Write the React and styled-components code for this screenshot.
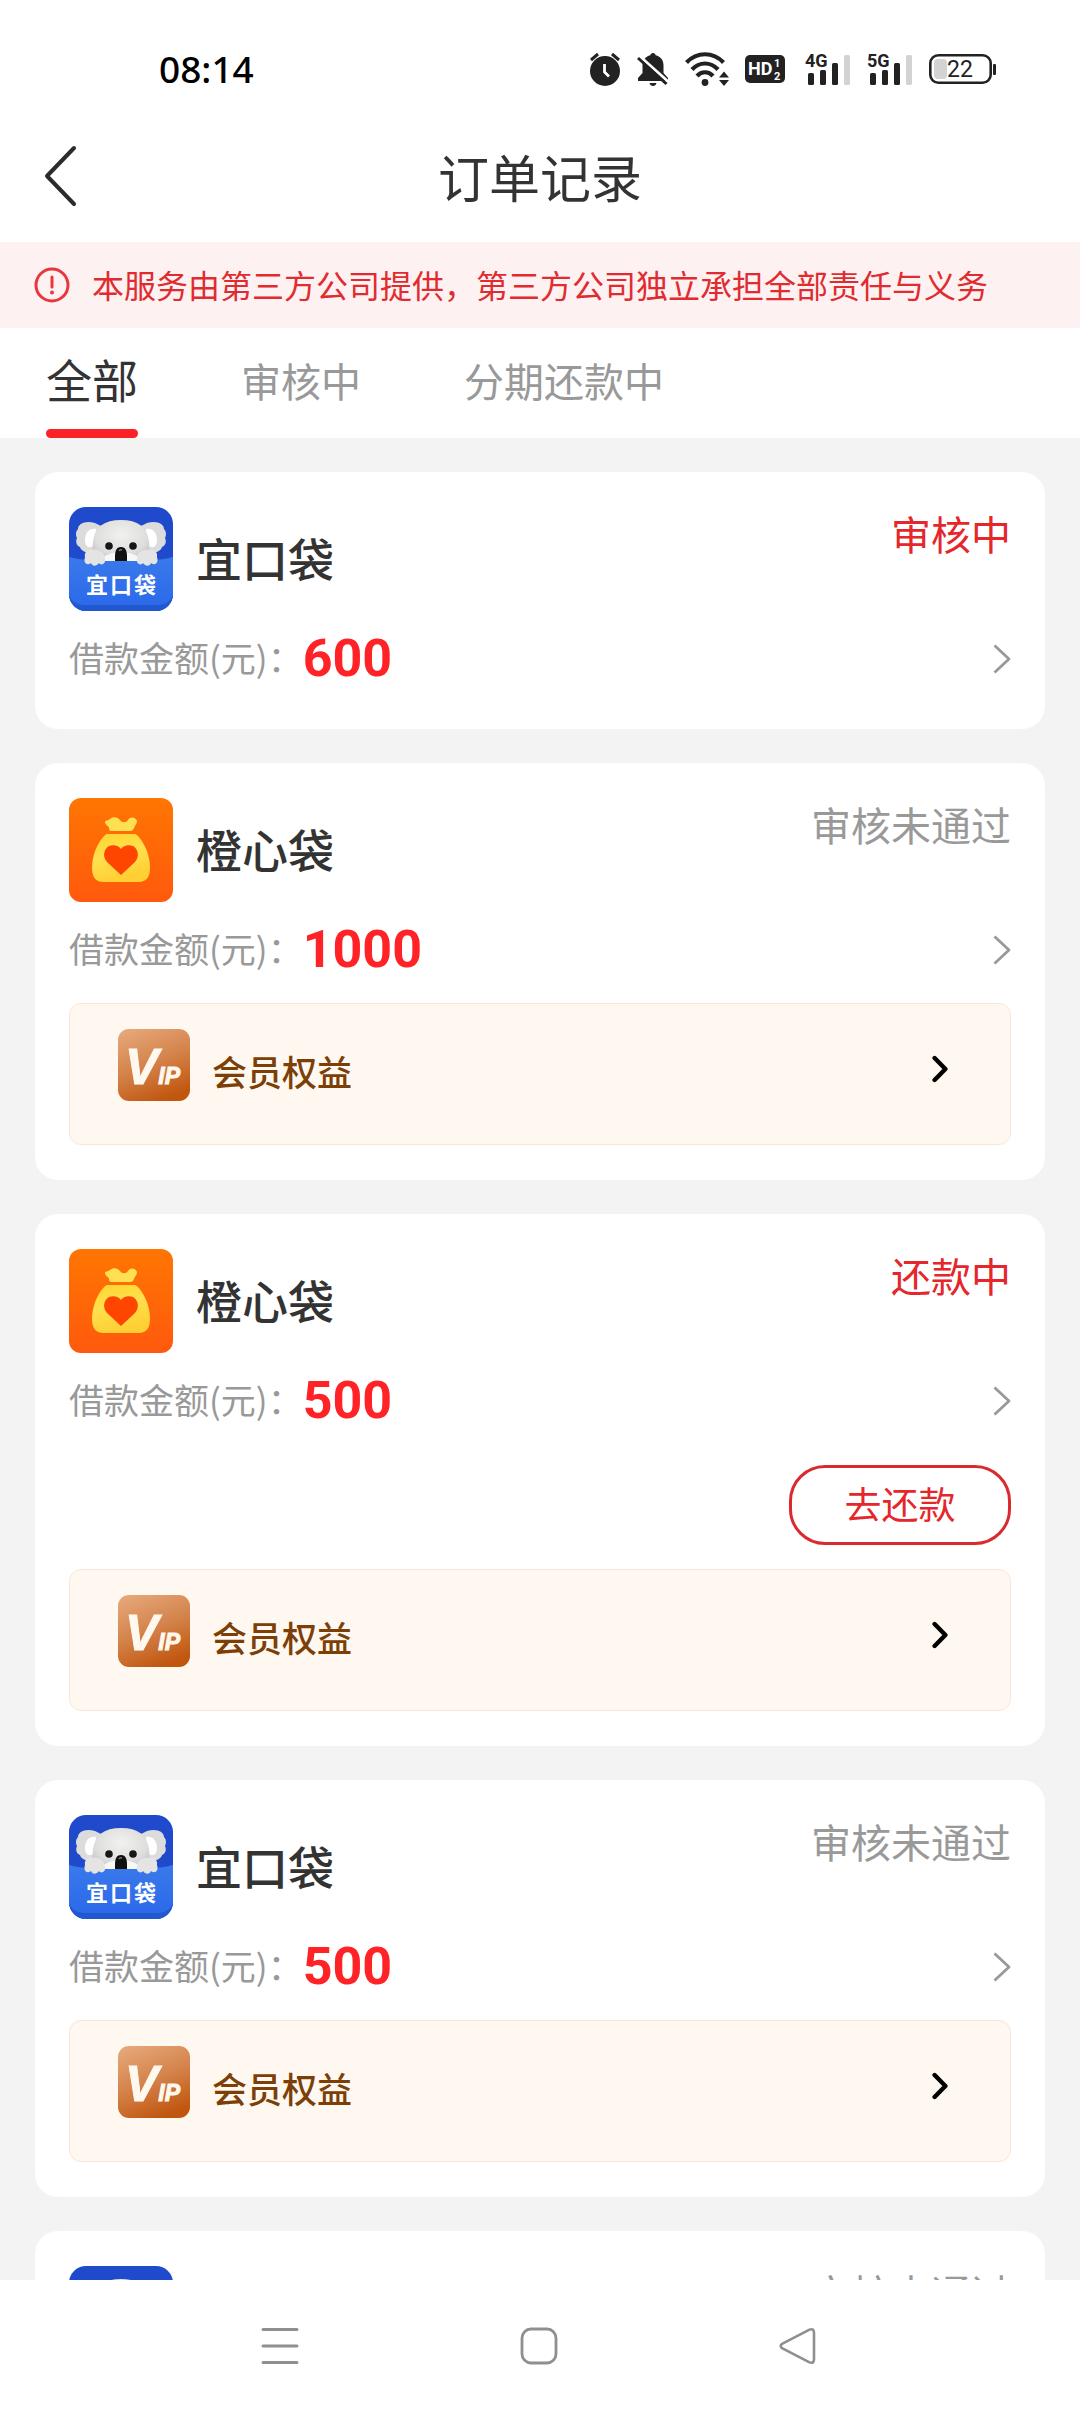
import { useState } from 'react'
import styled, { createGlobalStyle } from 'styled-components'

const tabs = ['全部', '审核中', '分期还款中']

const noticeText = '本服务由第三方公司提供\uff0c第三方公司独立承担全部责任与义务'
const amountText = '借款金额(元)\uff1a'

const orders = [
    { id: 1, product: 'koala', name: '宜口袋', amount: 600, status: '审核中', active: true },
    { id: 2, product: 'bag', name: '橙心袋', amount: 1000, status: '审核未通过', vip: true },
    { id: 3, product: 'bag', name: '橙心袋', amount: 500, status: '还款中', active: true, repay: true, vip: true },
    { id: 4, product: 'koala', name: '宜口袋', amount: 500, status: '审核未通过', vip: true },
    { id: 5, product: 'koala', name: '宜口袋', amount: 500, status: '审核未通过', vip: true },
]

function App() {
    const [current, setCurrent] = useState(tabs[0])

    return (
        <Screen>
            <GlobalStyle />
            <StatusBar />
            <Header>
                <BackButton type="button" aria-label="返回">
                    <svg width="34" height="62" viewBox="0 0 34 62" fill="none" stroke="#2b2b2b" strokeWidth="4" strokeLinecap="round" strokeLinejoin="round">
                        <path d="M30 3 L3 31 L30 59" />
                    </svg>
                </BackButton>
                <Title>订单记录</Title>
            </Header>
            <Notice>
                <svg width="36" height="36" viewBox="0 0 36 36" fill="none" stroke="#e8383d" strokeWidth="3" strokeLinecap="round">
                    <circle cx="18" cy="18" r="16" />
                    <path d="M18 10 V20" />
                    <circle cx="18" cy="25.5" r="2" fill="#e8383d" stroke="none" />
                </svg>
                <NoticeText>{noticeText}</NoticeText>
            </Notice>
            <Tabs role="tablist">
                {tabs.map((tab) => (
                    <Tab
                        key={tab}
                        type="button"
                        role="tab"
                        aria-selected={tab === current}
                        $active={tab === current}
                        onClick={() => setCurrent(tab)}
                    >
                        {tab}
                    </Tab>
                ))}
            </Tabs>
            <List>
                {orders.map((order) => (
                    <Order key={order.id} order={order} />
                ))}
            </List>
            <NavBar />
        </Screen>
    )
}

export default App

function Order({ order }) {
    return (
        <Card>
            <CardTop>
                {order.product === 'koala' ? <KoalaLogo /> : <BagLogo />}
                <ProductName>{order.name}</ProductName>
                <Status $active={order.active}>{order.status}</Status>
            </CardTop>
            <AmountRow href="#detail">
                <AmountLabel>{amountText}</AmountLabel>
                <Amount>{order.amount}</Amount>
                <svg width="18" height="30" viewBox="0 0 18 30" fill="none" stroke="#999" strokeWidth="2.8" strokeLinejoin="round">
                    <path d="M1.5 1.5 L16 15 L1.5 28.5" />
                </svg>
            </AmountRow>
            {order.repay && (
                <Actions>
                    <RepayButton type="button">去还款</RepayButton>
                </Actions>
            )}
            {order.vip && (
                <Benefits href="#vip">
                    <VipLogo />
                    <BenefitsText>会员权益</BenefitsText>
                    <BenefitsArrow viewBox="0 0 16 28" fill="none" stroke="#000" strokeWidth="4.4" strokeLinecap="round" strokeLinejoin="round">
                        <path d="M2.6 3 L13.4 14 L2.6 25" />
                    </BenefitsArrow>
                </Benefits>
            )}
        </Card>
    )
}

function StatusBar() {
    return (
        <StatusRow>
            <Clock>08:14</Clock>
            <StatusIcons>
                <svg width="32" height="34" viewBox="0 0 32 34">
                    <circle cx="16" cy="19" r="15" fill="#222" />
                    <path d="M2 8 L9 2 M30 8 L23 2" stroke="#222" strokeWidth="3" />
                    <path d="M15.5 12 V20 L20 24.5" fill="none" stroke="#fff" strokeWidth="2.8" />
                </svg>
                <svg width="32" height="34" viewBox="0 0 32 34">
                    <path d="M16 1 C17.5 1 18.5 2 18.6 3.2 C24 4.4 26.5 8.5 26.5 13 V21 L31 26 V29 H1 V26 L5.5 21 V13 C5.5 8.5 8 4.4 13.4 3.2 C13.5 2 14.5 1 16 1 Z" fill="#222" />
                    <path d="M12.5 31 H19.5 C19 33 17.8 34 16 34 S13 33 12.5 31 Z" fill="#222" />
                    <path d="M2.5 4 L31.5 30" stroke="#fff" strokeWidth="3" />
                    <path d="M1 6 L29.5 32" stroke="#222" strokeWidth="3" />
                </svg>
                <svg width="44" height="34" viewBox="0 0 44 34">
                    <g fill="none" stroke="#222" strokeWidth="4.2">
                        <path d="M1.5 10.5 C12 -0.5 28 -0.5 38.5 10.5" />
                        <path d="M7 17.5 C14.5 9.5 25.5 9.5 33 17.5" />
                        <path d="M12 24 C16.5 19 23.5 19 28 24" />
                    </g>
                    <circle cx="20" cy="30.5" r="3.4" fill="#222" />
                    <path d="M34 25.5 H44 L39 19.5 Z M34 28 H44 L39 34 Z" fill="#222" />
                </svg>
                <svg width="44" height="30" viewBox="0 0 44 30">
                    <rect x="0" y="1" width="40" height="28" rx="5" fill="#222" />
                    <SvgText x="3" y="21" fontSize="18" fill="#fff">HD</SvgText>
                    <SvgText x="29" y="13" fontSize="11" fill="#fff">1</SvgText>
                    <SvgText x="29" y="26" fontSize="11" fill="#fff">2</SvgText>
                </svg>
                <Signal label="4G" />
                <Signal label="5G" />
                <svg width="67" height="32" viewBox="0 0 67 32">
                    <rect x="1.3" y="2.3" width="60.4" height="27.4" rx="8" fill="none" stroke="#222" strokeWidth="2.6" />
                    <rect x="5" y="6" width="13" height="20" rx="4" fill="#d3d3d3" />
                    <rect x="64" y="11" width="3" height="11" rx="1" fill="#222" />
                    <SvgText x="31" y="24" fontSize="23" textAnchor="middle" fill="#222" $light>22</SvgText>
                </svg>
            </StatusIcons>
        </StatusRow>
    )
}

function Signal({ label }) {
    return (
        <svg width="46" height="40" viewBox="0 -3 46 40">
            <SvgText x="0" y="15" fontSize="18" fill="#222">{label}</SvgText>
            <rect x="3" y="21" width="6" height="12" rx="1.5" fill="#222" />
            <rect x="15" y="18" width="6" height="15" rx="1.5" fill="#222" />
            <rect x="27" y="11" width="6" height="22" rx="1.5" fill="#222" />
            <rect x="39" y="3" width="6" height="30" rx="1.5" fill="#d3d3d3" />
        </svg>
    )
}

function NavBar() {
    return (
        <Nav>
            <NavButton type="button" aria-label="最近任务">
                <svg width="38" height="38" viewBox="0 0 38 38" stroke="#8f8f8f" strokeWidth="3" strokeLinecap="round">
                    <path d="M2 2.5 H36 M2 19 H36 M2 35.5 H36" />
                </svg>
            </NavButton>
            <NavButton type="button" aria-label="主屏幕">
                <svg width="38" height="38" viewBox="0 0 38 38" fill="none" stroke="#8f8f8f" strokeWidth="2.8">
                    <rect x="2" y="2" width="34" height="34" rx="9" />
                </svg>
            </NavButton>
            <NavButton type="button" aria-label="返回">
                <svg width="38" height="38" viewBox="0 0 38 38" fill="none" stroke="#8f8f8f" strokeWidth="2.6" strokeLinejoin="round">
                    <path d="M3 16.8 L30.5 2.6 Q35 1 35 6 V32 Q35 37 30.5 35.4 L3 21.2 Q0.5 19 3 16.8 Z" />
                </svg>
            </NavButton>
        </Nav>
    )
}

function KoalaLogo() {
    return (
        <svg width="104" height="104" viewBox="0 0 104 104" role="img" aria-label="宜口袋">
            <defs>
                <clipPath id="koalaClip">
                    <rect width="104" height="104" rx="17" />
                </clipPath>
                <radialGradient id="koalaFur" cx="0.5" cy="0.35" r="0.65">
                    <stop offset="0" stopColor="#f1f1f0" />
                    <stop offset="0.7" stopColor="#dededd" />
                    <stop offset="1" stopColor="#c3c4c8" />
                </radialGradient>
                <linearGradient id="koalaPocket" x1="0" y1="0" x2="0" y2="1">
                    <stop offset="0" stopColor="#3a79ea" />
                    <stop offset="1" stopColor="#2a68ea" />
                </linearGradient>
            </defs>
            <g clipPath="url(#koalaClip)">
                <rect width="104" height="104" fill="#1f4acb" />
                <path d="M26 16 C16 13 9 17 9 22 C6 25 7 29 8 31 C6 35 8 39 11 40 C12 44 17 46 21 45 L32 44 L34 20 Z" fill="#dcdcdd" />
                <path d="M78 16 C88 13 95 17 95 22 C98 25 97 29 96 31 C98 35 96 39 93 40 C92 44 87 46 83 45 L72 44 L70 20 Z" fill="#dcdcdd" />
                <path d="M27 22 C18 20 14 30 17 38 C20 42 25 40 26 36 Z M77 22 C86 20 90 30 87 38 C84 42 79 40 78 36 Z" fill="#fff" />
                <path d="M52 13 C35 13 26 20 24 34 C23 43 24 50 28 56 H76 C80 50 81 43 80 34 C78 20 69 13 52 13 Z" fill="url(#koalaFur)" />
                <path d="M34 50 Q52 40 70 50 V55 H34 Z" fill="#f7f7f6" />
                <path d="M0 50 Q10 53 22 53 L34 54 H70 L82 53 Q94 53 104 50 V104 H0 Z" fill="url(#koalaPocket)" />
                <path d="M0 88 Q3 97 14 98 H90 Q101 97 104 88 V104 H0 Z" fill="#2258cf" />
                <circle cx="40" cy="39" r="3.8" fill="#171717" />
                <circle cx="64" cy="39" r="3.8" fill="#171717" />
                <path d="M52 40 C57 40 58 45 58 49 V54 H46 V49 C46 45 47 40 52 40 Z" fill="#101010" />
                <path d="M50 44 Q51 42 53 43" fill="none" stroke="#777" strokeWidth="1.4" />
                <path d="M16 50 C15 45 19 42 24 43 C31 42 36 46 36 52 C37 57 32 59 30 56 C27 60 23 59 22 56 C18 59 14 56 16 50 Z" fill="#e4e4e5" />
                <path d="M88 50 C89 45 85 42 80 43 C73 42 68 46 68 52 C67 57 72 59 74 56 C77 60 81 59 82 56 C86 59 90 56 88 50 Z" fill="#e4e4e5" />
                <LogoText x="17 41 65" y="86" fontSize="22">宜口袋</LogoText>
            </g>
        </svg>
    )
}

function BagLogo() {
    return (
        <svg width="104" height="104" viewBox="0 0 104 104" role="img" aria-label="橙心袋">
            <defs>
                <linearGradient id="bagBack" x1="0" y1="0" x2="0" y2="1">
                    <stop offset="0" stopColor="#ff7602" />
                    <stop offset="1" stopColor="#ff590d" />
                </linearGradient>
                <linearGradient id="bagBody" x1="0" y1="0" x2="0.3" y2="1">
                    <stop offset="0" stopColor="#ffd52e" />
                    <stop offset="0.5" stopColor="#ffe04e" />
                    <stop offset="1" stopColor="#ffcf34" />
                </linearGradient>
            </defs>
            <rect width="104" height="104" rx="12" fill="url(#bagBack)" />
            <path d="M36 24 C36 22 39 23 41 21 C44 18 49 19 51 22 C53 25 57 25 59 22 C61 18 67 19 68 23 C68 26 66 27 65 30 Q64 33 62 33 H42 Q40 33 40 30 C40 28 36 27 36 24 Z" fill="#ffe052" />
            <path d="M38 36 H66 C70 37 81 52 81 70 C81 79 77 84 70 84 H34 C27 84 23 79 23 70 C23 52 34 37 38 36 Z" fill="url(#bagBody)" />
            <path d="M52 77 L38 64 C33 58 35 51 40 48 C45 46 50 48 52 51 C54 48 59 46 64 48 C69 51 71 58 66 64 Z" fill="#ff4600" />
        </svg>
    )
}

function VipLogo() {
    return (
        <svg width="72" height="72" viewBox="0 0 72 72" aria-hidden="true">
            <defs>
                <linearGradient id="vipBack" x1="0.2" y1="0" x2="0.6" y2="1">
                    <stop offset="0" stopColor="#e5a678" />
                    <stop offset="0.5" stopColor="#d4834b" />
                    <stop offset="1" stopColor="#c1560f" />
                </linearGradient>
            </defs>
            <rect width="72" height="72" rx="11" fill="url(#vipBack)" />
            <VipText x="7" y="55" fontSize="50">V<tspan fontSize="23">IP</tspan></VipText>
        </svg>
    )
}

const GlobalStyle = createGlobalStyle`
    * {
        box-sizing: border-box;
    }

    body {
        margin: 0;
        background: #fff;
        font-family: "Noto Sans CJK SC", "Noto Sans", sans-serif;
    }

    button {
        padding: 0;
        border: 0;
        background: none;
        font-family: inherit;
        cursor: pointer;
    }

    a {
        color: inherit;
        text-decoration: none;
    }

    svg {
        display: block;
        flex: none;
    }
`

const Screen = styled.div`
    height: 100vh;
    display: flex;
    flex-direction: column;
    overflow: hidden;
`

const StatusRow = styled.div`
    flex: none;
    height: 110px;
    padding: 28px 84px 0 159px;
    display: flex;
    align-items: center;
    justify-content: space-between;
`

const Clock = styled.span`
    font-family: "Noto Sans", sans-serif;
    font-size: 37px;
    font-weight: 500;
    line-height: 48px;
    color: #000;
`

const StatusIcons = styled.div`
    display: flex;
    align-items: center;
    gap: 16px;
`

const SvgText = styled.text`
    font-family: Roboto, sans-serif;
    font-weight: ${({ $light }) => ($light ? 400 : 700)};
`

const LogoText = styled.text`
    font-family: "Noto Sans CJK SC", sans-serif;
    font-weight: 700;
    fill: #fff;
`

const VipText = styled.text`
    font-family: "Liberation Sans", sans-serif;
    font-weight: 700;
    font-style: italic;
    fill: #fff8ee;
    stroke: #fff8ee;
    stroke-width: 1;
`

const Header = styled.header`
    flex: none;
    height: 132px;
    padding: 0 44px;
    display: grid;
    grid-template-columns: 1fr auto 1fr;
    align-items: center;
`

const BackButton = styled.button`
    justify-self: start;
`

const Title = styled.h1`
    margin: 0;
    font-size: 51px;
    font-weight: 400;
    line-height: 72px;
    color: #333;
`

const Notice = styled.div`
    flex: none;
    height: 86px;
    padding: 0 34px;
    display: flex;
    align-items: center;
    gap: 22px;
    background: #fdf1f1;
`

const NoticeText = styled.p`
    margin: 0;
    padding-bottom: 2px;
    font-size: 32px;
    line-height: 48px;
    white-space: nowrap;
    color: #e02b30;
`

const Tabs = styled.div`
    flex: none;
    height: 110px;
    padding: 0 46px;
    display: flex;
    gap: 103px;
`

const Tab = styled.button`
    display: flex;
    flex-direction: column;
    justify-content: space-between;
    align-items: center;
    padding-top: 18px;
    font-size: ${({ $active }) => ($active ? 46 : 40)}px;
    line-height: ${({ $active }) => ($active ? 64 : 68)}px;
    color: ${({ $active }) => ($active ? '#333' : '#999')};

    &::after {
        content: '';
        width: 100%;
        height: 9px;
        border-radius: 5px;
        background: ${({ $active }) => ($active ? '#fa2226' : 'transparent')};
    }
`

const List = styled.main`
    flex: 1;
    min-height: 0;
    padding: 34px 35px;
    overflow: hidden;
    background: #f3f3f3;
`

const Card = styled.article`
    padding: 35px 34px;
    border-radius: 23px;
    background: #fff;

    & + & {
        margin-top: 34px;
    }
`

const CardTop = styled.div`
    display: flex;
    align-items: center;
    gap: 23px;
`

const ProductName = styled.h2`
    flex: 1;
    margin: 0;
    padding-bottom: 4px;
    font-size: 46px;
    font-weight: 500;
    line-height: 68px;
    color: #333;
`

const Status = styled.span`
    align-self: flex-start;
    font-size: 40px;
    line-height: 52px;
    color: ${({ $active }) => ($active ? '#e5262b' : '#999')};
`

const AmountRow = styled.a`
    height: 69px;
    margin-top: 14px;
    padding-bottom: 2px;
    display: flex;
    align-items: center;
`

const AmountLabel = styled.span`
    padding-bottom: 4px;
    font-size: 35px;
    line-height: 48px;
    color: #999;
`

const Amount = styled.strong`
    flex: 1;
    font-family: Roboto, sans-serif;
    font-size: 52px;
    font-weight: 700;
    line-height: 68px;
    color: #ff2226;
`

const Actions = styled.div`
    padding: 29px 0 6px;
    display: flex;
    justify-content: flex-end;
`

const RepayButton = styled.button`
    width: 222px;
    height: 80px;
    padding-bottom: 4px;
    border: 3px solid #d92b2f;
    border-radius: 36px;
    font-size: 37px;
    line-height: 48px;
    color: #e5262b;
`

const Benefits = styled.a`
    margin-top: 18px;
    padding: 25px 62px 43px 48px;
    display: flex;
    align-items: flex-end;
    gap: 22px;
    border: 1px solid #fae6d8;
    border-radius: 12px;
    background: #fff8f1;
`

const BenefitsText = styled.span`
    flex: 1;
    font-size: 35px;
    font-weight: 500;
    line-height: 60px;
    color: #7c3f08;
`

const BenefitsArrow = styled.svg`
    width: 16px;
    height: 28px;
    margin-bottom: 18px;
`

const Nav = styled.nav`
    flex: none;
    height: 132px;
    padding: 0 153px 0 151px;
    display: grid;
    grid-template-columns: repeat(3, 1fr);
    background: #fff;
`

const NavButton = styled.button`
    display: flex;
    align-items: center;
    justify-content: center;
`
